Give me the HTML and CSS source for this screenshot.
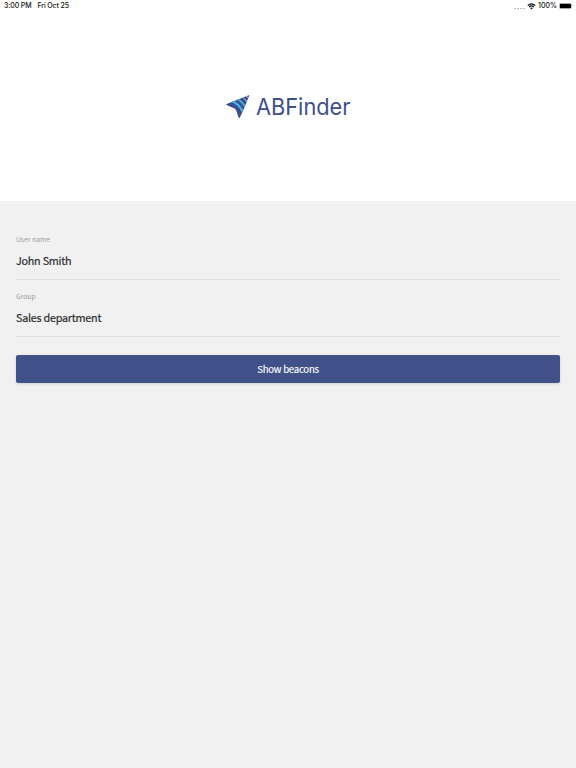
FILE: index.html
```
<!DOCTYPE html>
<html lang="en">
<head>
    <meta charset="UTF-8">
    <meta name="viewport" content="width=device-width, initial-scale=1.0">
    <title>ABFinder</title>
    <link rel="stylesheet" href="styles.css">
</head>
<body>
    <header class="header">
        <div class="status-bar">
            <div class="status-left">
                <span class="time">3:00 PM</span>
                <span class="date">Fri Oct 25</span>
            </div>
            <div class="status-right">
                <span class="signal"><i></i><i></i><i></i><i></i></span>
                <svg class="wifi" viewBox="0 0 18 14">
                    <path d="M1.5 5 Q9 -1.8 16.5 5 M4.2 8 Q9 3.8 13.8 8" fill="none" stroke="#111" stroke-width="2.4"/>
                    <path d="M6.2 10.1 Q9 7.8 11.8 10.1 L9 13z" fill="#111"/>
                </svg>
                <span class="percent">100%</span>
                <svg class="battery" viewBox="0 0 14 6">
                    <rect x=".25" y=".25" width="12.3" height="5.5" rx="1.5" fill="none" stroke="#999" stroke-width=".5"/>
                    <rect x=".8" y=".7" width="11.2" height="4.6" rx="1" fill="#000"/>
                    <path d="M13.1 2 Q14 3 13.1 4z" fill="#888"/>
                </svg>
            </div>
        </div>
        <div class="logo">
            <svg class="logo-icon" viewBox="0 0 24 24">
                <defs>
                    <clipPath id="arrow">
                        <path d="M23.4 0 L0 9.2 C0 10.5 7 12 9.2 14 C11.2 16 11.6 22.2 13.4 23.2 C15.5 20 20 9 23.4 0z"/>
                    </clipPath>
                </defs>
                <g clip-path="url(#arrow)">
                    <rect width="24" height="24" fill="#3d4f88"/>
                    <g fill="none">
                        <path d="M5.8 6 Q13 8.7 17.6 18" stroke="#49b4ee" stroke-width="1.9"/>
                        <path d="M10.8 3.7 Q16.6 6.5 20.2 13.4" stroke="#49b4ee" stroke-width="1.8"/>
                        <path d="M15.6 1.7 Q19.8 4.1 22.3 9" stroke="#a5d3f0" stroke-width="1"/>
                        <path d="M19 .2 Q22 1.7 23.7 4.6" stroke="#fff" stroke-width=".8"/>
                    </g>
                </g>
            </svg>
            <svg class="logo-name" viewBox="0 0 100 30">
                <text x="-1" y="23" textLength="94.5" lengthAdjust="spacingAndGlyphs">ABFinder</text>
            </svg>
        </div>
    </header>

    <main class="content">
        <div class="field">
            <div class="label">User name</div>
            <div class="value">John Smith</div>
        </div>
        <div class="field">
            <div class="label">Group</div>
            <div class="value">Sales department</div>
        </div>
        <button class="btn">Show beacons</button>
    </main>
</body>
</html>
```
FILE: styles.css
```
* {
    margin: 0;
    padding: 0;
    box-sizing: border-box;
}

body {
    min-height: 100vh;
    background: #f1f1f1;
    font-family: "Noto Sans CJK SC", "Noto Sans", sans-serif;
    color: #2d2d2f;
}

.header {
    height: 200.5px;
    background: #fff;
}

.status-bar {
    display: flex;
    justify-content: space-between;
    height: 12px;
    padding: 0 3px 0 4px;
    font-family: Inter, sans-serif;
    font-size: 7px;
    font-weight: 500;
    line-height: 12px;
    color: #111;
}

.status-left,
.status-right {
    display: flex;
    align-items: center;
}

.status-left {
    gap: 6px;
    letter-spacing: -0.12px;
}

.signal {
    display: flex;
    gap: 1px;
    margin: 4px 2px 0 0;
}

.signal i {
    width: 2px;
    height: 1px;
    background: #bbb;
}

.wifi {
    width: 9px;
    height: 7px;
    margin-right: 2px;
}

.percent {
    margin-right: 2px;
}

.battery {
    width: 14px;
    height: 6px;
}

.logo {
    display: flex;
    align-items: center;
    padding: 80px 0 0 226px;
}

.logo-icon {
    width: 24px;
    height: 24px;
    margin-bottom: 1px;
}

.logo-name {
    width: 100px;
    height: 30px;
    margin-left: 7px;
    overflow: visible;
    font-family: Inter, sans-serif;
    font-size: 22.8px;
    font-weight: 400;
    fill: #3d4f88;
}

.content {
    padding: 32.5px 16px;
}

.field {
    height: 47px;
    margin-bottom: 10px;
    border-bottom: 1px solid #e0e0e0;
}

.label {
    font-size: 6.8px;
    line-height: 12px;
    color: #9b9b9b;
}

.value {
    margin-top: 6px;
    font-size: 10.8px;
    line-height: 18px;
    letter-spacing: -0.25px;
    -webkit-text-stroke: 0.2px;
}

.btn {
    display: block;
    width: 100%;
    height: 28px;
    margin-top: 17.5px;
    border: none;
    border-radius: 2px;
    background: #405088;
    box-shadow: 0 1px 3px rgba(0, 0, 0, 0.15);
    color: #fff;
    font-family: inherit;
    font-size: 9.6px;
    letter-spacing: -0.25px;
    -webkit-text-stroke: 0.15px;
    cursor: pointer;
}
```
